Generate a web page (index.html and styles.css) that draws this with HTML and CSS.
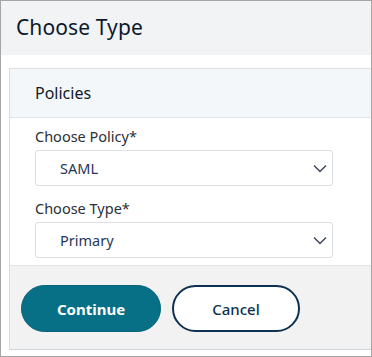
FILE: index.html
```html
<!DOCTYPE html>
<html>
<head>
<meta charset="utf-8">
<link rel="stylesheet" href="styles.css">
</head>
<body>
<div class="frame">
  <div class="header"><h1 class="title">Choose Type</h1></div>
  <div class="content">
    <div class="card">
      <div class="card-head">Policies</div>
      <div class="card-body">
        <div class="field">
          <label class="label">Choose Policy*</label>
          <div class="select"><span class="value">SAML</span>
            <svg class="chev" width="14" height="9" viewBox="0 0 14 9"><path d="M1 1.5 L7 7.5 L13 1.5" fill="none" stroke="#3a4658" stroke-width="1.4"/></svg>
          </div>
        </div>
        <div class="field">
          <label class="label">Choose Type*</label>
          <div class="select"><span class="value">Primary</span>
            <svg class="chev" width="14" height="9" viewBox="0 0 14 9"><path d="M1 1.5 L7 7.5 L13 1.5" fill="none" stroke="#3a4658" stroke-width="1.4"/></svg>
          </div>
        </div>
      </div>
      <div class="footer">
        <button class="btn btn-primary">Continue</button>
        <button class="btn btn-secondary">Cancel</button>
      </div>
    </div>
  </div>
</div>
</body>
</html>
```
FILE: styles.css
```css
html, body { margin: 0; padding: 0; background: #fff; }
body { font-family: "Noto Sans", "Liberation Sans", sans-serif; }
.frame {
  width: 372px; height: 357px; box-sizing: border-box;
  border: 1px solid #a5a5a5;
  display: flex; flex-direction: column;
  overflow: hidden;
}
.header {
  height: 54px; background: #f2f3f5;
  display: flex; align-items: center; padding-left: 15px;
  flex-shrink: 0;
}
.title {
  margin: 0; font-size: 21px; font-weight: 400; color: #0c1a2c;
  letter-spacing: 0.1px; position: relative; top: -1px;
}
.content { padding: 13px 0 0 8px; }
.card {
  border-left: 1px solid #d9dde2;
  border-top: 1px solid #dde1e6;
  border-bottom: 1px solid #cdd4dc;
}
.card-head {
  height: 49px; box-sizing: border-box;
  background: #f4f7fa; border-bottom: 1px solid #e1e5ea;
  display: flex; align-items: center; padding-left: 25px;
  font-size: 16px; color: #111a26;
}
.card-body {
  padding: 8px 0 7px 25px;
  display: flex; flex-direction: column; gap: 12px;
}
.field { display: flex; flex-direction: column; gap: 4px; }
.label { font-size: 14.5px; color: #2b2f36; line-height: 20px; }
.select {
  width: 298px; height: 36px; box-sizing: border-box;
  border: 1px solid #dcdfe4; border-radius: 3px; background: #fff;
  display: flex; align-items: center; justify-content: space-between;
  padding: 0 5px 0 24px;
}
.value { font-size: 14.5px; color: #26375a; }
.footer {
  background: #f2f2f2; border-top: 1px solid #e2e4e7;
  height: 84px; box-sizing: border-box;
  display: flex; align-items: center; gap: 11px;
  padding: 2px 0 0 11px;
}
.btn {
  height: 47px; border-radius: 24px; font-family: inherit;
  font-size: 15px; cursor: pointer; box-sizing: border-box;
}
.btn-primary {
  width: 140px; background: #077086; color: #fff; font-weight: 700;
  border: 1px solid #066276;
}
.btn-secondary {
  width: 128px; background: #fff; color: #0d3150; font-weight: 500;
  border: 2px solid #0d3150;
}
```
